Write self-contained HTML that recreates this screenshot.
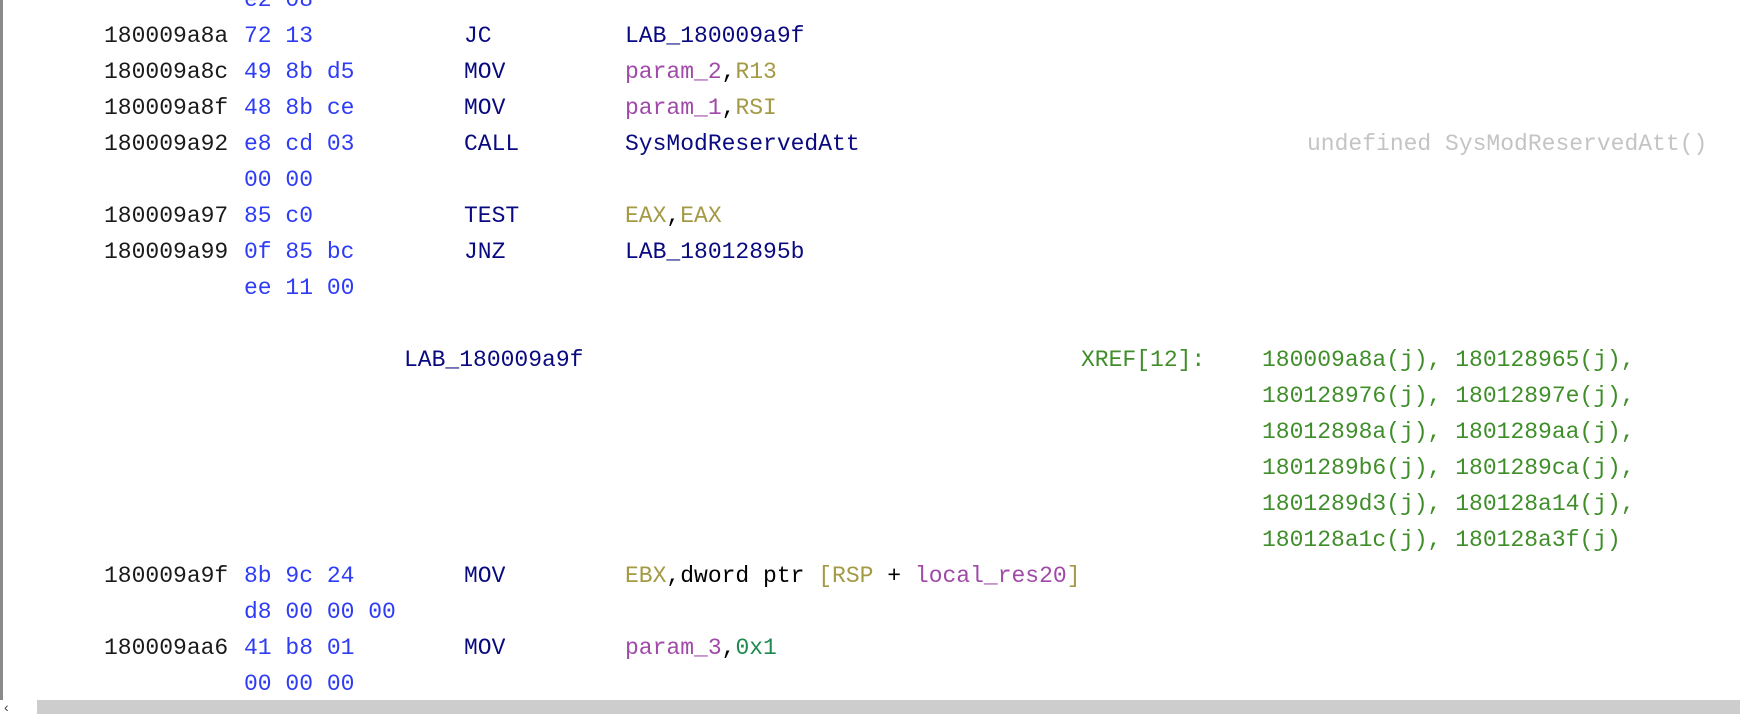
<!DOCTYPE html>
<html><head><meta charset="utf-8"><style>
html,body{margin:0;padding:0;background:#fff;width:1740px;height:714px;overflow:hidden;position:relative}
.l{position:absolute;left:0;height:36px;line-height:36px;font-family:"Liberation Mono",monospace;font-size:23px;white-space:pre;width:1740px}
.l span{position:absolute;top:0}
.a{color:#1a1a1a;left:104px}
.b{color:#2f3cf5;left:244px}
.m{color:#0a0a80;left:464px}
.o{left:625px;color:#000}
.lab{color:#0a0a80}
.p{color:#a04aa8}
.r{color:#a49a45}
.g{color:#3f8e2a}
.n{color:#1e8a50}
.c{color:#c4c4c4;left:1307px}
.bar{position:absolute;left:0;top:0;width:3px;height:700px;background:#8a8a8a}
.sb{position:absolute;left:37px;top:700px;width:1703px;height:14px;background:#cdcdcd}
.ar{position:absolute;left:4px;top:700px;font:14px "Liberation Sans",sans-serif;color:#444;line-height:14px}
</style></head><body>
<div class="bar"></div>
<div class="l" style="top:-18px"><span class="b">e2 08</span></div>
<div class="l" style="top:18px"><span class="a">180009a8a</span><span class="b">72 13</span><span class="m">JC</span><span class="o lab">LAB_180009a9f</span></div>
<div class="l" style="top:54px"><span class="a">180009a8c</span><span class="b">49 8b d5</span><span class="m">MOV</span><span class="o"><span class="p" style="position:static">param_2</span>,<span class="r" style="position:static">R13</span></span></div>
<div class="l" style="top:90px"><span class="a">180009a8f</span><span class="b">48 8b ce</span><span class="m">MOV</span><span class="o"><span class="p" style="position:static">param_1</span>,<span class="r" style="position:static">RSI</span></span></div>
<div class="l" style="top:126px"><span class="a">180009a92</span><span class="b">e8 cd 03</span><span class="m">CALL</span><span class="o lab">SysModReservedAtt</span><span class="c">undefined SysModReservedAtt()</span></div>
<div class="l" style="top:162px"><span class="b">00 00</span></div>
<div class="l" style="top:198px"><span class="a">180009a97</span><span class="b">85 c0</span><span class="m">TEST</span><span class="o"><span class="r" style="position:static">EAX</span>,<span class="r" style="position:static">EAX</span></span></div>
<div class="l" style="top:234px"><span class="a">180009a99</span><span class="b">0f 85 bc</span><span class="m">JNZ</span><span class="o lab">LAB_18012895b</span></div>
<div class="l" style="top:270px"><span class="b">ee 11 00</span></div>
<div class="l" style="top:342px"><span class="lab" style="left:404px">LAB_180009a9f</span><span class="g" style="left:1081px">XREF[12]:</span><span class="g" style="left:1262px">180009a8a(j), 180128965(j),</span></div>
<div class="l" style="top:378px"><span class="g" style="left:1262px">180128976(j), 18012897e(j),</span></div>
<div class="l" style="top:414px"><span class="g" style="left:1262px">18012898a(j), 1801289aa(j),</span></div>
<div class="l" style="top:450px"><span class="g" style="left:1262px">1801289b6(j), 1801289ca(j),</span></div>
<div class="l" style="top:486px"><span class="g" style="left:1262px">1801289d3(j), 180128a14(j),</span></div>
<div class="l" style="top:522px"><span class="g" style="left:1262px">180128a1c(j), 180128a3f(j)</span></div>
<div class="l" style="top:558px"><span class="a">180009a9f</span><span class="b">8b 9c 24</span><span class="m">MOV</span><span class="o"><span class="r" style="position:static">EBX</span>,dword ptr <span class="r" style="position:static">[RSP</span> + <span class="p" style="position:static">local_res20</span><span class="r" style="position:static">]</span></span></div>
<div class="l" style="top:594px"><span class="b">d8 00 00 00</span></div>
<div class="l" style="top:630px"><span class="a">180009aa6</span><span class="b">41 b8 01</span><span class="m">MOV</span><span class="o"><span class="p" style="position:static">param_3</span>,<span class="n" style="position:static">0x1</span></span></div>
<div class="l" style="top:666px"><span class="b">00 00 00</span></div>
<div class="sb"></div>
<div class="ar">‹</div>
</body></html>
